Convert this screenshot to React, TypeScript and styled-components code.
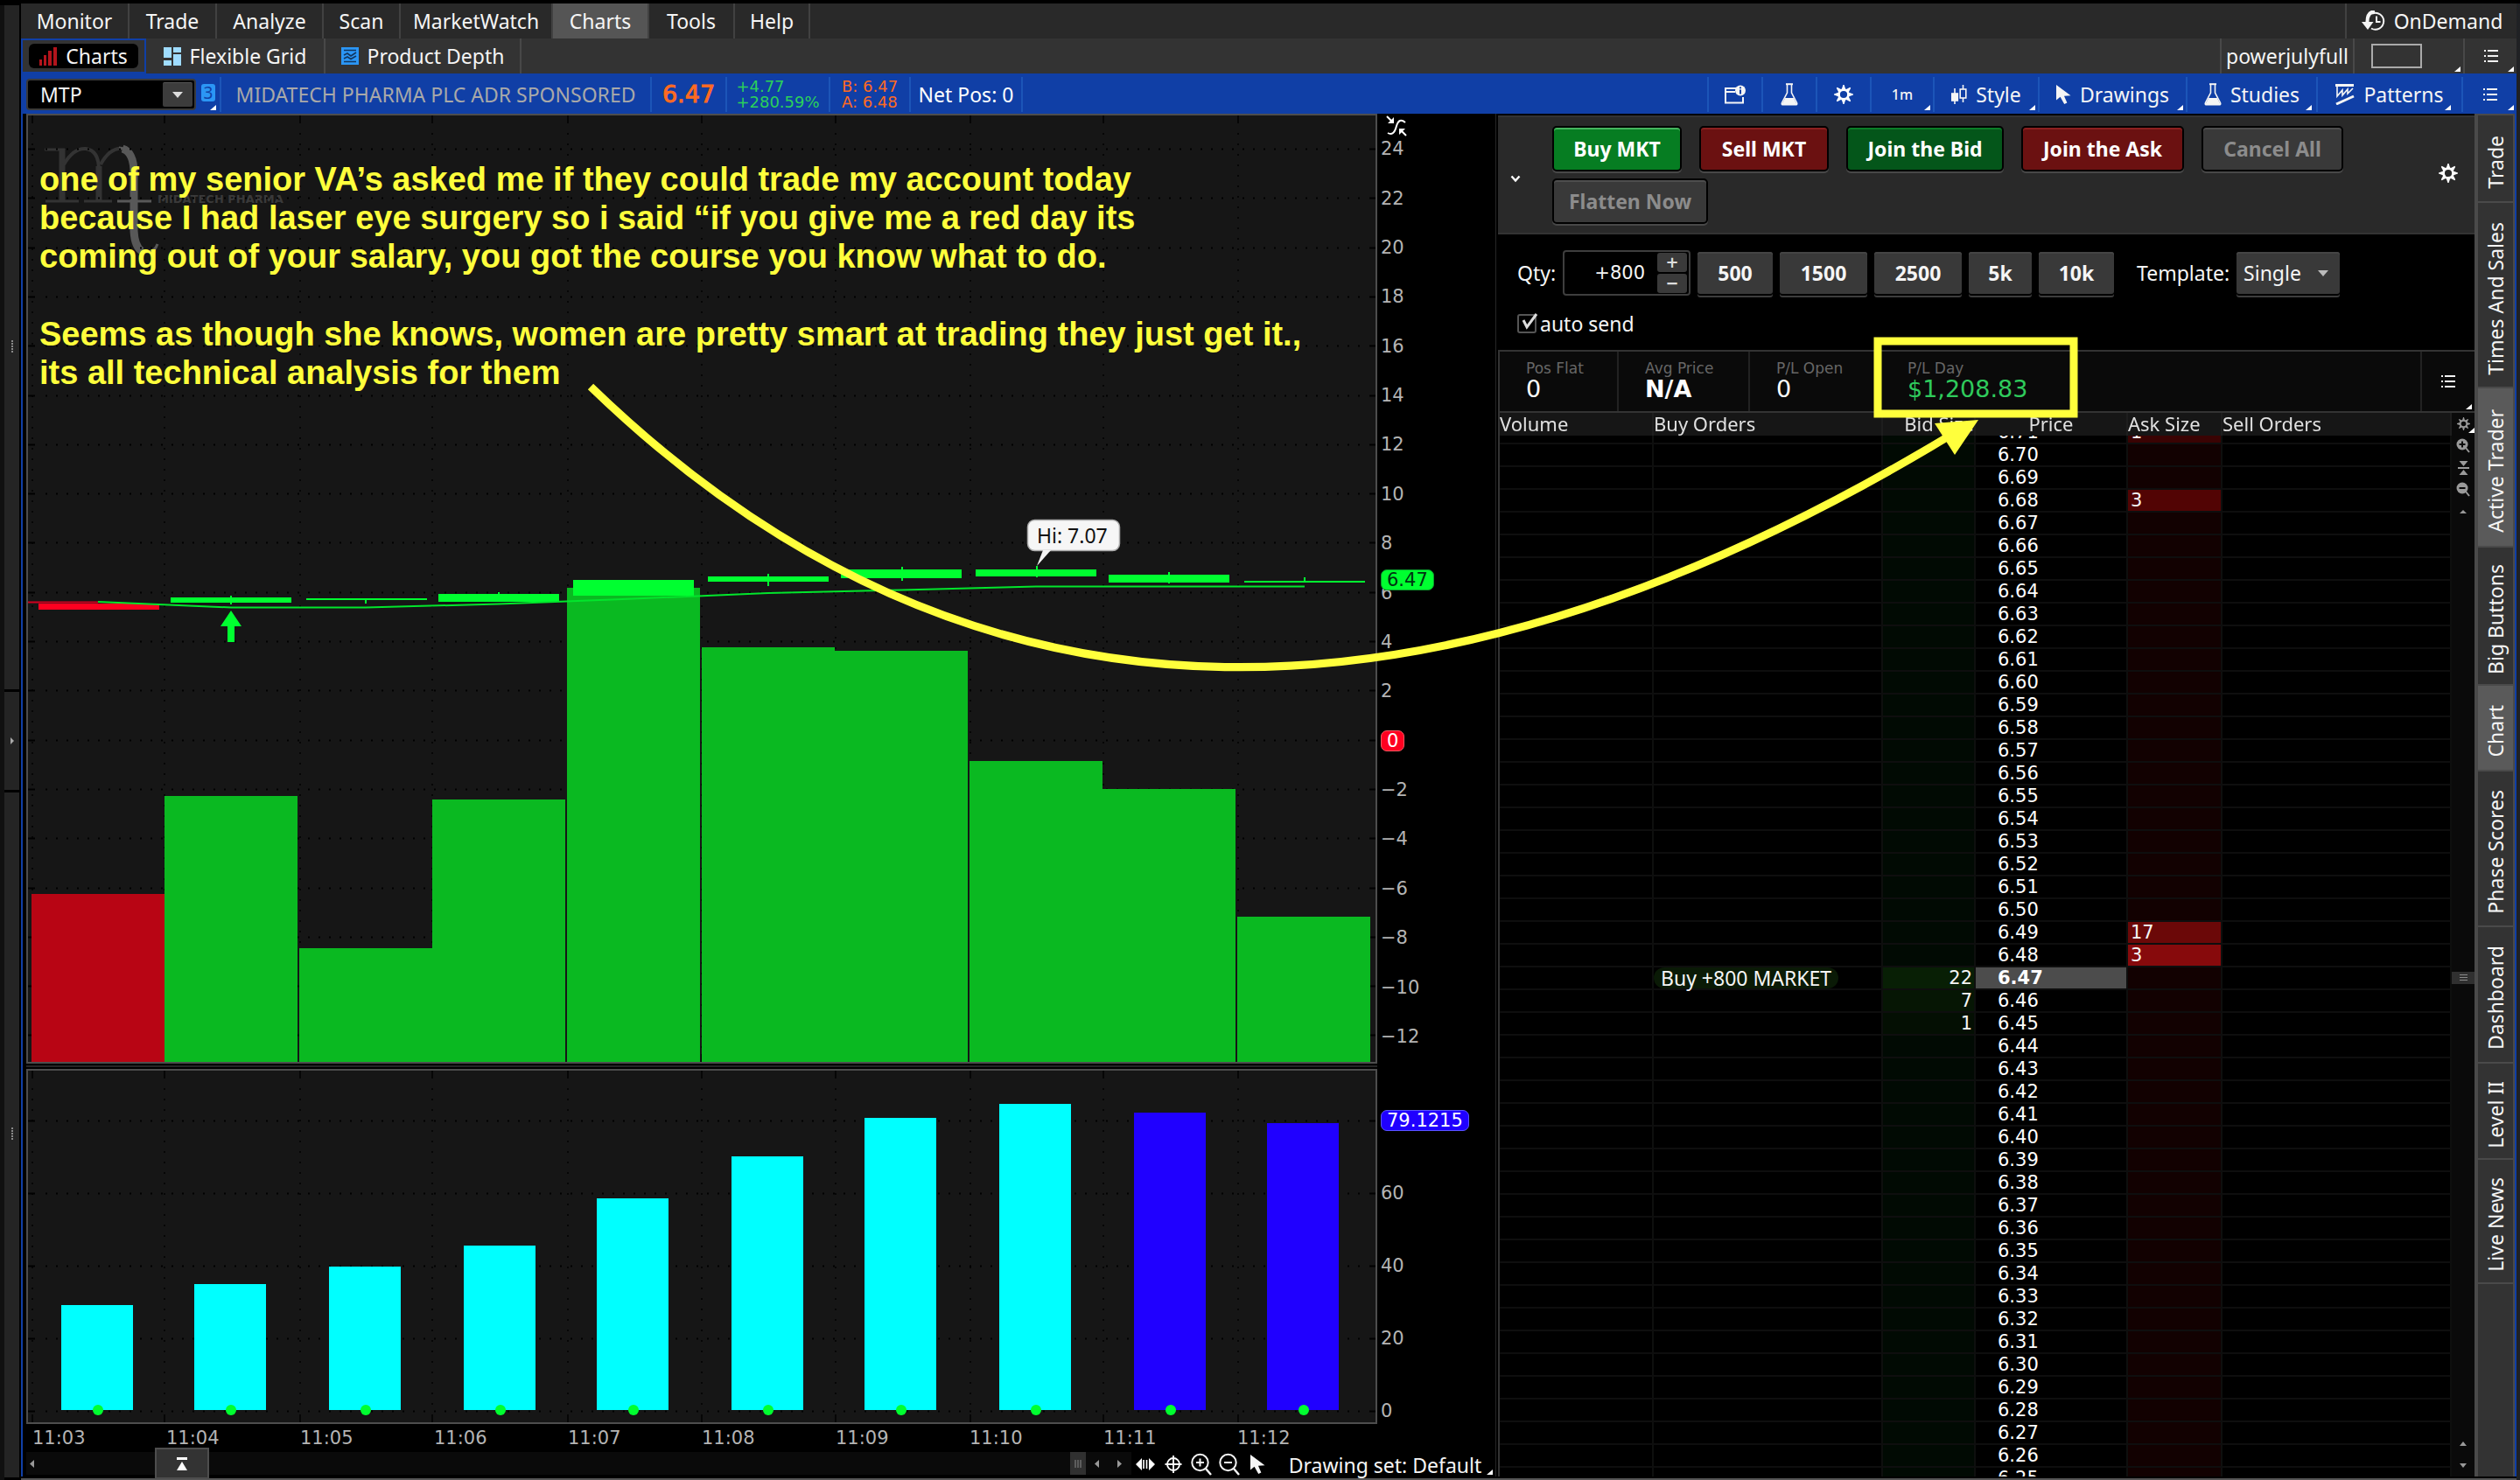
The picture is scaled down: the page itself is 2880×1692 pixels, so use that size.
import React, { useLayoutEffect, useRef } from "react";
import styled, { createGlobalStyle, css } from "styled-components";

const TEXT = `"Noto Sans", "Open Sans", sans-serif`;
const DIGITS = `"DejaVu Sans", "Noto Sans", sans-serif`;
const YELLOW = "#ffff3c";
const BLUE = "#103fa6";

const GlobalStyle = createGlobalStyle`
  * { box-sizing: border-box; }
  body { margin: 0; background: #000; color: #f5f5f5; font: 400 23px/30px ${TEXT}; overflow: hidden; }
  button, input, select { font: inherit; color: inherit; margin: 0; padding: 0; border: 0; background: none; border-radius: 0; }
  p { margin: 0; }
`;

/* ---------- shell ---------- */
const Shell = styled.div`
  position: relative;
  display: flex;
  height: 100vh;
  background: #000;
  border-top: 4px solid #000;
  overflow: hidden;
`;
const Gutter = styled.aside`
  width: 24px;
  flex: none;
  display: flex;
  flex-direction: column;
  margin-top: 2px;
  background: #242424;
  border-left: 5px solid #101010;
  border-right: 2px solid #000;
`;
const GutterPart = styled.div<{ $grow: number }>`
  flex: ${(p) => p.$grow} 1 0;
  display: flex;
  align-items: center;
  justify-content: center;
  border-bottom: 3px solid #000;
`;
const Main = styled.main`
  flex: 1;
  min-width: 0;
  display: flex;
  flex-direction: column;
`;
const RightEdge = styled.div`
  width: 4px;
  flex: none;
  background: #202124;
`;

/* ---------- menu and tab rows ---------- */
const MenuBar = styled.nav`
  display: flex;
  height: 40px;
  background: #292929;
`;
const MenuItem = styled.button<{ $w: number; $active?: boolean }>`
  width: ${(p) => p.$w}px;
  border-right: 2px solid #414141;
  background: ${(p) => (p.$active ? "#555" : "transparent")};
  white-space: nowrap;
`;
const Spacer = styled.div`
  flex: 1;
`;
const OnDemand = styled.button`
  width: 196px;
  display: flex;
  align-items: center;
  justify-content: center;
  gap: 8px;
  border-left: 2px solid #414141;
`;
const TabBar = styled.div`
  display: flex;
  height: 40px;
  background: #333;
`;
const Tab = styled.button<{ $w: number; $active?: boolean }>`
  width: ${(p) => p.$w}px;
  display: flex;
  align-items: center;
  justify-content: center;
  gap: 10px;
  white-space: nowrap;
  border-right: 2px solid #484848;
  ${(p) =>
    p.$active &&
    css`
      border: 2px solid ${BLUE};
    `}
`;
const TabPill = styled.span`
  display: flex;
  align-items: center;
  gap: 10px;
  height: 28px;
  padding: 0 12px;
  border-radius: 6px;
  background: #000;
`;
const TabTool = styled.button<{ $w: number }>`
  position: relative;
  width: ${(p) => p.$w}px;
  display: flex;
  align-items: center;
  justify-content: center;
  border-left: 2px solid #484848;
`;
const ColorSwatch = styled.span`
  width: 58px;
  height: 28px;
  margin-right: 28px;
  border: 2px solid #aaa;
`;
const Corner = styled.i<{ $right?: number }>`
  position: absolute;
  right: ${(p) => p.$right ?? 3}px;
  bottom: 2px;
  width: 7px;
  height: 6px;
  background: #fff;
  clip-path: polygon(100% 0, 100% 100%, 0 100%);
`;

/* ---------- symbol bar ---------- */
const SymbolBar = styled.div`
  display: flex;
  align-items: stretch;
  height: 46px;
  padding: 4px 0 2px;
  background: ${BLUE};
`;
const SymbolBox = styled.div`
  display: flex;
  align-items: center;
  width: 194px;
  height: 36px;
  margin: 2px 6px 0;
  padding: 0 2px 0 14px;
  border: 2px solid #3a3a3a;
  border-radius: 4px;
  background: #000;
`;
const SymbolInput = styled.input`
  width: 140px;
  outline: 0;
`;
const SymbolDrop = styled.button`
  width: 34px;
  height: 28px;
  display: flex;
  align-items: center;
  justify-content: center;
  background: #3c3c3c;
  border-top: 1px solid #555;
  border-radius: 2px;
`;
const LinkCell = styled.button`
  position: relative;
  width: 21px;
  padding-bottom: 4px;
`;
const LinkBadge = styled.span`
  display: block;
  width: 16px;
  border-radius: 3px;
  background: #2b96f5;
  color: ${BLUE};
  font-size: 19px;
  line-height: 20px;
`;
const QuoteCell = styled.div<{ $w: number; $tone?: string }>`
  width: ${(p) => p.$w}px;
  display: flex;
  align-items: center;
  justify-content: center;
  border-left: 2px solid #1c55b8;
  color: ${(p) => p.$tone ?? "#fff"};
  white-space: nowrap;
`;
const LastPrice = styled.strong`
  font: 500 27px/32px ${DIGITS};
  -webkit-text-stroke: 1px currentColor;
`;
const TwoLine = styled.div`
  font: 400 18px/18px ${DIGITS};
`;
const ToolButton = styled.button<{ $w: number; $small?: boolean }>`
  position: relative;
  width: ${(p) => p.$w}px;
  display: flex;
  align-items: center;
  justify-content: center;
  gap: 10px;
  border-left: 2px solid #1c55b8;
  white-space: nowrap;
  ${(p) => p.$small && css`font-size: 16px; font-weight: 500;`}
`;

/* ---------- body ---------- */
const Body = styled.div`
  flex: 1;
  min-height: 0;
  display: grid;
  grid-template-columns: minmax(0, 1683fr) minmax(0, 1119fr) 46px;
  border: solid ${BLUE};
  border-width: 0 2px;
`;
const BottomLine = styled.div`
  height: 4px;
  flex: none;
  border-top: 2px solid #000;
  background: #555;
`;

/* ---------- chart column ---------- */
const ChartColumn = styled.section`
  min-width: 0;
  display: flex;
  flex-direction: column;
  padding-left: 4px;
`;
const PlotRow = styled.div<{ $grow: number }>`
  flex: ${(p) => p.$grow} 1 0;
  min-height: 0;
  display: grid;
  grid-template-columns: minmax(0, 1fr) 135px;
`;
const Plot = styled.div`
  min-height: 0;
  border: 2px solid #4d4d4d;
  background: #161616;
  svg { display: block; width: 100%; height: 100%; }
`;
const PaneSplit = styled.div`
  height: 6px;
  margin-right: 135px;
  border: solid #000;
  border-width: 2px 0;
  background: #262626;
`;
const Axis = styled.div<{ $top: number; $spill?: number }>`
  position: relative;
  display: flex;
  flex-direction: column;
  margin-bottom: -${(p) => p.$spill ?? 0}px;
  padding: ${(p) => p.$top}px 0 3px 4px;
  font: 400 21px/24px ${DIGITS};
  color: #b4b4b4;
`;
const Tick = styled.div`
  flex: 1;
  display: flex;
  align-items: center;
`;
const Bubble = styled.span<{ $bg: string; $edge: string; $ink: string }>`
  height: 24px;
  padding: 0 6px;
  border: 1px solid ${(p) => p.$edge};
  border-radius: 7px;
  background: ${(p) => p.$bg};
  color: ${(p) => p.$ink};
  font: 400 21px/22px ${DIGITS};
`;
const FloatBubble = styled(Bubble)`
  position: absolute;
  left: 4px;
  top: 48%;
`;
const AxisTool = styled.button`
  position: absolute;
  left: 10px;
  top: 2px;
`;
const TimeAxis = styled.div`
  display: flex;
  height: 32px;
  flex: none;
  margin-right: 142px;
  padding-left: 7px;
  font: 400 21px/32px ${DIGITS};
  color: #b4b4b4;
`;
const TimeTick = styled.span`
  flex: 1;
`;
const ChartFooter = styled.footer`
  display: flex;
  height: 28px;
  flex: none;
`;
const ScrollTrack = styled.div`
  flex: 1;
  display: flex;
  align-items: center;
  height: 26px;
  padding-left: 4px;
  background: #0a0a0a;
`;
const ExpandButton = styled.button`
  width: 62px;
  height: 36px;
  margin: 0 auto 0 138px;
  border: 2px solid #4d4d4d;
  background: #333;
  z-index: 1;
`;
const ScrollThumb = styled.div`
  width: 18px;
  height: 26px;
  display: flex;
  align-items: center;
  justify-content: center;
  background: #303030;
`;
const FooterIcon = styled.button<{ $w: number }>`
  width: ${(p) => p.$w}px;
  display: flex;
  align-items: center;
  justify-content: center;
`;
const DrawingSet = styled.button`
  position: relative;
  width: 256px;
  padding-left: 4px;
  white-space: nowrap;
`;

/* ---------- trader column ---------- */
const Trader = styled.section`
  min-width: 0;
  min-height: 0;
  display: flex;
  flex-direction: column;
  border-left: 1px solid #262626;
  padding: 2px 0 0 2px;
`;
const ActionPane = styled.div`
  display: flex;
  align-items: center;
  height: 136px;
  border: solid #333;
  border-width: 2px 0;
  background: #292929;
`;
const Fold = styled.button`
  width: 62px;
  padding: 0 0 0 14px;
  text-align: left;
`;
const ActionList = styled.div`
  flex: 1;
  display: flex;
  flex-wrap: wrap;
  gap: 8px 20px;
`;
const tones = {
  buy: ["#067d22", "#45b55e", "#fff"],
  bid: ["#04561a", "#0b7d28", "#fff"],
  sell: ["#6b1111", "#8c2020", "#fff"],
  off: ["#393939", "#4e4e4e", "#8c8c8c"],
};
const ActionButton = styled.button<{ $tone: keyof typeof tones; $w: number }>`
  width: ${(p) => p.$w}px;
  height: 52px;
  border: 2px solid #000;
  border-radius: 5px;
  background: ${(p) => tones[p.$tone][0]};
  box-shadow: inset 0 2px ${(p) => tones[p.$tone][1]}, 0 2px #484848;
  color: ${(p) => tones[p.$tone][2]};
  font-weight: 700;
`;
const GearCell = styled.button`
  width: 60px;
`;
const OrderPane = styled.div`
  display: flex;
  flex-direction: column;
  gap: 22px;
  padding: 18px 22px;
`;
const OrderRow = styled.div`
  display: flex;
  align-items: center;
  gap: 8px;
  height: 52px;
`;
const QtyLabel = styled.label`
  width: 44px;
`;
const QtyBox = styled.div`
  display: flex;
  align-items: center;
  width: 146px;
  height: 52px;
  padding-right: 2px;
  border: 2px solid #3e3e3e;
  border-radius: 4px;
`;
const QtyInput = styled.input`
  width: 92px;
  text-align: right;
  font: 400 21px/24px ${DIGITS};
  outline: 0;
`;
const Steps = styled.div`
  display: flex;
  flex-direction: column;
  gap: 2px;
  margin-left: auto;
`;
const Step = styled.button`
  width: 34px;
  height: 22px;
  border-radius: 3px;
  background: #3a3a3a;
  font: 700 18px/20px ${DIGITS};
  color: #ddd;
`;
const SizeButton = styled.button<{ $w: number }>`
  width: ${(p) => p.$w}px;
  height: 48px;
  border-radius: 3px;
  background: #393939;
  box-shadow: inset 0 2px #454545, 0 2px #000, 0 4px #3c3c3c;
  font-weight: 700;
`;
const TemplateLabel = styled.label`
  display: flex;
  align-items: center;
  gap: 8px;
  margin-left: 18px;
`;
const SelectWrap = styled.span`
  position: relative;
  display: flex;
  align-items: center;
  width: 118px;
  height: 48px;
  border-radius: 3px;
  background: #393939;
  box-shadow: inset 0 2px #454545, 0 2px #000, 0 4px #3c3c3c;
  svg { position: absolute; right: 13px; pointer-events: none; }
`;
const Select = styled.select`
  appearance: none;
  width: 100%;
  padding-left: 8px;
`;
const CheckLabel = styled.label`
  position: relative;
  display: flex;
  align-items: center;
  gap: 4px;
  height: 20px;
  margin-bottom: 2px;
  svg { position: absolute; left: 2px; top: -3px; pointer-events: none; }
`;
const Check = styled.input`
  appearance: none;
  width: 22px;
  height: 22px;
  border: 2px solid #555;
  border-radius: 3px;
`;
const Stats = styled.div`
  display: flex;
  height: 72px;
  border: solid #333;
  border-width: 2px 0 2px 2px;
  background: #0a0a0a;
`;
const Stat = styled.div<{ $w: number; $last?: boolean }>`
  width: ${(p) => p.$w}px;
  padding: 8px 0 0 30px;
  border-right: ${(p) => (p.$last ? "0" : "2px solid #222")};
  white-space: nowrap;
`;
const StatName = styled.div`
  font: 400 17px/22px ${DIGITS};
  color: #666;
`;
const StatValue = styled.div<{ $up?: boolean; $strong?: boolean }>`
  font: ${(p) => (p.$strong ? 700 : 400)} 27px/26px ${DIGITS};
  color: ${(p) => (p.$up ? "#2fcb5c" : "#fff")};
`;
const StatsMenu = styled.button`
  position: relative;
  width: 62px;
  margin-left: auto;
  border-left: 2px solid #222;
`;
const LadderPane = styled.div`
  flex: 1;
  min-height: 0;
  display: flex;
`;
const LadderView = styled.div`
  flex: 1;
  min-width: 0;
  overflow: hidden;
  border-left: 2px solid #333;
`;
const Ladder = styled.table`
  width: 100%;
  table-layout: fixed;
  border-collapse: separate;
  border-spacing: 0;
`;
const Head = styled.th<{ $align?: string; $w: number }>`
  position: sticky;
  top: 0;
  width: ${(p) => p.$w}px;
  height: 26px;
  padding: 0 0 2px;
  background: #161616;
  border-right: 2px solid #1e1e1e;
  color: #e0e0e0;
  font-size: 22px;
  font-weight: 400;
  line-height: 24px;
  text-align: ${(p) => p.$align ?? "left"};
  white-space: nowrap;
`;
const Cell = styled.td<{ $bg?: string }>`
  height: 26px;
  padding: 0;
  border-right: 2px solid #0e0f0e;
  border-bottom: 2px solid #0e0e0e;
  background: ${(p) => p.$bg ?? "#000"};
  line-height: 24px;
  white-space: nowrap;
`;
const BidCell = styled(Cell)`
  padding-right: 2px;
  text-align: right;
  font: 400 21px/24px ${DIGITS};
`;
const PriceCell = styled(Cell)<{ $now: boolean }>`
  padding-left: 25px;
  color: #fff;
  font: ${(p) => (p.$now ? 700 : 400)} 21px/24px ${DIGITS};
`;
const AskCell = styled(Cell)`
  padding-left: 3px;
  font: 400 21px/24px ${DIGITS};
`;
const Order = styled.span`
  display: inline-block;
  padding: 0 8px;
  border-radius: 12px;
  background: #0a1a06;
`;
const LadderTools = styled.div`
  width: 26px;
  display: flex;
  flex-direction: column;
  align-items: center;
  background: #0a0a0a;
`;
const LadderTool = styled.button`
  position: relative;
  width: 26px;
  height: 25px;
  display: flex;
  align-items: center;
  justify-content: center;
  color: #9a9a9a;
`;
const LadderThumb = styled.div`
  width: 26px;
  height: 14px;
  display: flex;
  align-items: center;
  justify-content: center;
  background: #303030;
`;

/* ---------- right rail ---------- */
const Rail = styled.nav`
  display: flex;
  flex-direction: column;
  border: solid #4a4a4a;
  border-width: 2px 2px 0 4px;
  background: #333;
`;
const RailTab = styled.button<{ $h: number; $active?: boolean }>`
  height: ${(p) => p.$h}px;
  display: flex;
  align-items: center;
  justify-content: center;
  padding-top: 8px;
  border-bottom: 2px solid #4a4a4a;
  background: ${(p) => (p.$active ? "#5a5a5a" : "#333")};
  span { writing-mode: vertical-rl; transform: rotate(180deg); line-height: 32px; }
`;

/* ---------- notes drawn over the workspace ---------- */
const Note = styled.div`
  position: absolute;
  left: 45px;
  top: 179px;
  color: ${YELLOW};
  font: 700 38px/44px "Liberation Sans", Arial, sans-serif;
  white-space: nowrap;
  p + p { margin-top: 45px; }
`;
const Ink = styled.svg`
  position: absolute;
  left: 0;
  top: -4px;
  width: 100%;
  height: 100vh;
  pointer-events: none;
`;

/* ---------- icons ---------- */
const ListIcon = () => (
  <svg width="16" height="18" viewBox="0 0 16 18" fill="#f2f2f2">
    {[2, 8, 14].map((y) => (
      <React.Fragment key={y}>
        <rect x="0" y={y} width="2" height="2" />
        <rect x="4" y={y} width="12" height="2" />
      </React.Fragment>
    ))}
  </svg>
);
const Gear = ({ size = 22, color = "#fff" }) => (
  <svg width={size} height={size} viewBox="0 0 22 22" stroke={color} fill="none">
    <circle cx="11" cy="11" r="5.4" strokeWidth="2.6" />
    {[0, 45, 90, 135, 180, 225, 270, 315].map((a) => (
      <path key={a} d="M8.6 5.5L10.4 0H11.6L13.4 5.5Z" fill={color} stroke="none" transform={`rotate(${a} 11 11)`} />
    ))}
  </svg>
);
const Flask = () => (
  <svg width="20" height="26" viewBox="0 0 20 26" fill="none" stroke="#f5f5f5">
    <path d="M6 1.2H14" strokeWidth="2" />
    <path d="M7.5 2V11L1.5 22.5Q0.6 24.8 3 24.8H17Q19.4 24.8 18.5 22.5L12.5 11V2" strokeWidth="1.6" />
    <path d="M5.2 17H14.8L18 23Q18.6 24.6 17 24.6H3Q1.4 24.6 2 23Z" fill="#f5f5f5" stroke="none" />
  </svg>
);
const Cursor = () => (
  <svg width="17" height="22" viewBox="0 0 17 22" fill="#f5f5f5">
    <path d="M0 0V17.5L4.6 13.8L9.2 22L12.4 20.6L9 12.8L16.5 12.2Z" />
  </svg>
);
const caretPaths = {
  down: "M0 0H10L5 10Z",
  up: "M0 10H10L5 0Z",
  left: "M10 0V10L0 5Z",
  right: "M0 0V10L10 5Z",
};
const Caret = ({ w = 12, h = 7, color = "#ccc", d = "down" }: { w?: number; h?: number; color?: string; d?: keyof typeof caretPaths }) => (
  <svg width={w} height={h} viewBox="0 0 10 10" preserveAspectRatio="none" fill={color}>
    <path d={caretPaths[d]} />
  </svg>
);
const Grip = ({ w, h, rows = false }: { w: number; h: number; rows?: boolean }) => (
  <svg width={w} height={h} viewBox={`0 0 ${w} ${h}`} stroke="#8a8a8a" strokeWidth="1">
    {(rows ? [0.5, 3.5, 6.5] : [1, 4, 7]).map((v) => (
      <path key={v} d={rows ? `M0 ${v}H${w}` : `M${v} 0V${h}`} />
    ))}
  </svg>
);
const Dots = () => (
  <svg width="2" height="16" viewBox="0 0 2 16" fill="#8a8a8a">
    {[0, 3, 6, 9, 12].map((y) => <rect key={y} y={y} width="2" height="2" />)}
  </svg>
);
const Lens = ({ plus }: { plus?: boolean }) => (
  <svg width="24" height="26" viewBox="0 0 24 26" fill="none" stroke="#f5f5f5" strokeWidth="2">
    <circle cx="10.5" cy="11" r="9.2" />
    <path d="M17 18L23 25" strokeWidth="2.4" />
    <path d={plus ? "M6 11H15M10.5 6.5V15.5" : "M6 11H15"} />
  </svg>
);
const SmallLens = ({ plus }: { plus?: boolean }) => (
  <svg width="16" height="17" viewBox="0 0 16 17">
    <circle cx="7" cy="7" r="6.5" fill="#9a9a9a" />
    <path d="M11 11L15 16" stroke="#9a9a9a" strokeWidth="2" />
    <path d={plus ? "M3.5 7H10.5M7 3.5V10.5" : "M3.5 7H10.5"} stroke="#0a0a0a" strokeWidth="2" />
  </svg>
);

/* ---------- chart data ---------- */
const times = ["11:03", "11:04", "11:05", "11:06", "11:07", "11:08", "11:09", "11:10", "11:11", "11:12"];
const gridX = [37, 188, 343, 494, 649, 802, 955, 1109, 1261, 1415];
const volume = [
  [36, 1022], [188, 910], [342, 1084], [494, 914], [648, 672],
  [802, 740], [954, 744], [1108, 870], [1260, 902], [1414, 1048],
];
const candles = [
  [195, 683, 6, 264, 681, 691], [350, 684, 2, 418, 684, 690], [501, 679, 9, 570, 677, 680], [655, 663, 18, 0, 0, 0],
  [809, 659, 6, 878, 656, 670], [961, 651, 10, 1031, 648, 664], [1115, 651, 8, 1185, 647, 660],
  [1267, 657, 9, 1336, 654, 667], [1422, 664, 2, 1491, 660, 664],
];
const study = [[70, 1492], [222, 1468], [376, 1448], [530, 1424], [682, 1370], [836, 1322], [988, 1278], [1142, 1262], [1296, 1272], [1448, 1284]];
const priceY = Array.from({ length: 19 }, (_, i) => Math.round(170 + i * 56.3));
const studyY = [1281, 1364, 1447, 1530, 1613];

const GridLines = ({ ys, top, bottom }: { ys: number[]; top: number; bottom: number }) => (
  <g stroke="#000">
    {ys.map((y) => (
      <React.Fragment key={y}>
        <path d={`M52 ${y}.5H1562`} strokeWidth="2" strokeDasharray="2 10" />
        <path d={`M32 ${y}.5H40M1565 ${y}.5H1572`} strokeWidth="2" />
      </React.Fragment>
    ))}
    {gridX.map((x) => (
      <React.Fragment key={x}>
        <path d={`M${x} ${top + 20}V${bottom - 10}`} strokeWidth="1.4" strokeDasharray="2 10" />
        <path d={`M${x} ${top}V${top + 9}M${x} ${bottom - 9}V${bottom}`} strokeWidth="1.4" />
      </React.Fragment>
    ))}
  </g>
);

const PriceChart = () => (
  <svg viewBox="32 132 1540 1082" preserveAspectRatio="none">
    <g fill="none" stroke="#333">
      <path d="M51 171H74M52 230H90M96 230H128" strokeWidth="3" />
      <path d="M71 170V229M113 190V229" strokeWidth="7" />
      <path d="M73 188Q84 169 98 170Q113 172 113 194" strokeWidth="4" />
      <path d="M115 188Q126 168 141 170" strokeWidth="4" />
    </g>
    <g fill="none" stroke="#585858">
      <path d="M136 169Q153 170 153 196V262Q154 286 168 288Q177 288 180 279" strokeWidth="3" />
      <path d="M140 170Q153 174 153 198V264Q154 282 162 287" strokeWidth="9" />
      <path d="M134 230H173" strokeWidth="3" />
    </g>
    <text x="180" y="232" fill="#3a3a3a" fontFamily="DejaVu Sans" fontWeight="700" fontSize="13">MIDATECH PHARMA</text>
    <GridLines ys={priceY} top={132} bottom={1214} />
    {volume.map(([x, y], i) => (
      <rect key={x} x={x} y={y} width="152" height={1214 - y} fill={i ? "#0ab921" : "#b80514"} />
    ))}
    <g fill="#00ff30" stroke="#00ff30">
      {candles.map(([x, y, h, wx, w1, w2]) => (
        <React.Fragment key={x}>
          <rect x={x} y={y} width="138" height={h} stroke="none" />
          {wx > 0 && <path d={`M${wx} ${w1}V${w2}`} strokeWidth="2" />}
        </React.Fragment>
      ))}
      <path d="M264 698L276 716H268V734H260V716H252Z" stroke="none" />
    </g>
    <rect x="44" y="690" width="138" height="7" fill="#ff0020" />
    <path d="M32 688.5H112" stroke="#d00020" strokeWidth="2" />
    <path d="M112 688L264 694.5H418L570 690.5L724 684.5L878 678L1031 674.5L1184 670.5H1491" fill="none" stroke="#02e62c" strokeWidth="2" />
    <rect x="1174.5" y="594.5" width="105" height="35" rx="8" fill="#f6f6f6" stroke="#aaa" strokeWidth="1.5" />
    <path d="M1192 629L1185 647L1201 629Z" fill="#f4f4f4" />
    <text x="1185" y="621" fill="#111" fontFamily="Noto Sans" fontSize="23">Hi: 7.07</text>
  </svg>
);

const StudyChart = () => (
  <svg viewBox="32 1224 1540 402" preserveAspectRatio="none">
    <GridLines ys={studyY} top={1224} bottom={1626} />
    {study.map(([x, y], i) => (
      <rect key={x} x={x} y={y} width="82" height={1612 - y} fill={i > 7 ? "#2000ff" : "#00ffff"} />
    ))}
    {study.map(([x]) => <circle key={x} cx={x + 42} cy="1612" r="6" fill="#00ff30" />)}
  </svg>
);

/* ---------- ladder data ---------- */
const asks: Record<string, [string, string]> = {
  "6.71": ["1", "#3a0303"], "6.68": ["3", "#520404"], "6.49": ["17", "#6b0808"], "6.48": ["3", "#870a0c"],
};
const bids: Record<string, [string, string]> = {
  "6.47": ["22", "#081f05"], "6.46": ["7", "#061604"], "6.45": ["1", "#040f03"],
};
const prices = Array.from({ length: 47 }, (_, i) => ((671 - i) / 100).toFixed(2));

const menus: [string, number][] = [["Monitor", 124], ["Trade", 100], ["Analyze", 122], ["Scan", 88], ["MarketWatch", 174], ["Charts", 110], ["Tools", 98], ["Help", 86]];
const rail: [string, number][] = [["Trade", 100], ["Times And Sales", 212], ["Active Trader", 182], ["Big Buttons", 158], ["Chart", 98], ["Phase Scores", 178], ["Dashboard", 156], ["Level II", 110], ["Live News", 142]];

export default function App() {
  const ladder = useRef<HTMLDivElement>(null);
  useLayoutEffect(() => {
    if (ladder.current) ladder.current.scrollTop = 16;
  }, []);

  return (
    <>
      <GlobalStyle />
      <Shell>
        <Gutter>
          <GutterPart $grow={785}><Dots /></GutterPart>
          <GutterPart $grow={112}><Caret d="right" w={4} h={8} color="#aaa" /></GutterPart>
          <GutterPart $grow={786}><Dots /></GutterPart>
        </Gutter>
        <Main>
          <MenuBar>
            {menus.map(([m, w]) => <MenuItem key={m} $w={w} $active={m === "Charts"}>{m}</MenuItem>)}
            <Spacer />
            <OnDemand>
              <svg width="30" height="24" viewBox="0 0 30 24" fill="none" stroke="#f5f5f5" strokeWidth="2">
                <path d="M13 3.5A9.5 9.5 0 1 1 12 20.5" />
                <path d="M18 6.5V13H22.5" />
                <path d="M16 1Q7 2 7.5 14" strokeWidth="4" />
                <path d="M1 13H14.5L8 22Z" fill="#f5f5f5" stroke="none" />
              </svg>
              OnDemand
            </OnDemand>
          </MenuBar>

          <TabBar>
            <Tab $w={143} $active>
              <TabPill>
                <svg width="20" height="21" viewBox="0 0 20 21" fill="#b3141c">
                  <rect y="14" width="3" height="7" /><rect x="5" y="9" width="3" height="12" />
                  <rect x="10" y="4" width="4" height="17" /><rect x="16" width="4" height="21" />
                </svg>
                Charts
              </TabPill>
            </Tab>
            <Tab $w={205}>
              <svg width="20" height="21" viewBox="0 0 20 21" fill="#9fdcff">
                <rect width="9" height="12" /><rect x="11" width="9" height="6" /><rect y="15" width="9" height="6" /><rect x="11" y="8" width="9" height="13" />
              </svg>
              Flexible Grid
            </Tab>
            <Tab $w={224}>
              <svg width="20" height="20" viewBox="0 0 20 20" fill="none" stroke="#12365f" strokeWidth="1.6">
                <rect width="20" height="20" fill="#2b96f5" stroke="none" />
                <path d="M3 3.5H17M3 16.5H17M3 9L7 7L11 10L17 6M3 13L7 11L11 13.5L17 10" />
              </svg>
              Product Depth
            </Tab>
            <Spacer />
            <TabTool $w={152}>powerjulyfull</TabTool>
            <TabTool $w={126}><ColorSwatch /><Corner /></TabTool>
            <TabTool $w={61}><ListIcon /><Corner /></TabTool>
          </TabBar>

          <SymbolBar>
            <SymbolBox>
              <SymbolInput aria-label="Symbol" defaultValue="MTP" />
              <SymbolDrop aria-label="Symbol list"><Caret color="#ddd" /></SymbolDrop>
            </SymbolBox>
            <LinkCell aria-label="Link 3"><LinkBadge>3</LinkBadge><Corner $right={4} /></LinkCell>
            <QuoteCell $w={492} $tone="#a9a9a9">MIDATECH PHARMA PLC ADR SPONSORED</QuoteCell>
            <QuoteCell $w={86} $tone="#ff6a22"><LastPrice>6.47</LastPrice></QuoteCell>
            <QuoteCell $w={118} $tone="#2bd15a"><TwoLine>+4.77<br />+280.59%</TwoLine></QuoteCell>
            <QuoteCell $w={92} $tone="#ff6a22"><TwoLine>B: 6.47<br />A: 6.48</TwoLine></QuoteCell>
            <QuoteCell $w={128}>Net Pos: 0</QuoteCell>
            <QuoteCell $w={2} />
            <Spacer />
            <ToolButton $w={62} aria-label="Info">
              <svg width="24" height="22" viewBox="0 0 24 22" fill="none" stroke="#f5f5f5" strokeWidth="2">
                <path d="M13 4H1V20.5H21V14M1 8H12" />
                <circle cx="18" cy="6.5" r="6" fill="#f5f5f5" stroke="none" />
                <path d="M18 2.5V4.2M18 5.5V10.5" stroke={BLUE} />
              </svg>
            </ToolButton>
            <ToolButton $w={62} aria-label="Studies"><Flask /></ToolButton>
            <ToolButton $w={62} aria-label="Settings"><Gear /></ToolButton>
            <ToolButton $w={72} $small>1m<Corner /></ToolButton>
            <ToolButton $w={120}>
              <svg width="18" height="22" viewBox="0 0 18 22" fill="none" stroke="#f5f5f5" strokeWidth="1.6">
                <path d="M4 4V22" /><rect x="0.8" y="10" width="6.5" height="8" fill="#f5f5f5" />
                <path d="M13.5 0V5M13.5 15V20" /><rect x="10.2" y="5" width="6.6" height="10" />
              </svg>
              Style<Corner />
            </ToolButton>
            <ToolButton $w={169}><Cursor />Drawings<Corner /></ToolButton>
            <ToolButton $w={149}><Flask />Studies<Corner $right={5} /></ToolButton>
            <ToolButton $w={166}>
              <svg width="22" height="24" viewBox="0 0 22 24" fill="none" stroke="#f5f5f5">
                <path d="M0 1.5H21" strokeWidth="3" /><path d="M2 3V14L8 7V13L14 6V11L20 5" strokeWidth="1.6" /><path d="M1 23L21 14" strokeWidth="3" />
              </svg>
              Patterns<Corner $right={12} />
            </ToolButton>
            <ToolButton $w={63} aria-label="Menu"><ListIcon /><Corner /></ToolButton>
          </SymbolBar>

          <Body>
            <ChartColumn>
              <PlotRow $grow={1086}>
                <Plot><PriceChart /></Plot>
                <Axis $top={12}>
                  <AxisTool aria-label="Scale">
                    <svg width="24" height="24" viewBox="0 0 24 24" fill="none" stroke="#fff" strokeWidth="2">
                      <path d="M2 20Q9 24 12 12Q15 2 22 8" />
                      <path d="M1 1L7 7M23 23L17 17" />
                      <path d="M9 2V9H2ZM15 22V15H22Z" fill="#fff" stroke="none" />
                    </svg>
                  </AxisTool>
                  {priceY.map((_, i) => {
                    const v = 24 - i * 2;
                    return <Tick key={v}>{v === 0 ? <Bubble $bg="#ff0020" $edge="#ff5a62" $ink="#fff">0</Bubble> : String(v).replace("-", "−")}</Tick>;
                  })}
                  <FloatBubble $bg="#00ff30" $edge="#0a9a2b" $ink="#031">6.47</FloatBubble>
                </Axis>
              </PlotRow>
              <PaneSplit />
              <PlotRow $grow={406}>
                <Plot><StudyChart /></Plot>
                <Axis $top={18} $spill={29}>
                  <Tick><Bubble $bg="#2000ff" $edge="#5a55ff" $ink="#fff">79.1215</Bubble></Tick>
                  {[60, 40, 20, 0].map((v) => <Tick key={v}>{v}</Tick>)}
                </Axis>
              </PlotRow>
              <TimeAxis>{times.map((t) => <TimeTick key={t}>{t}</TimeTick>)}</TimeAxis>
              <ChartFooter>
                <ScrollTrack>
                  <Caret d="left" w={5} h={9} color="#999" />
                  <ExpandButton aria-label="Expand">
                    <svg width="14" height="16" viewBox="0 0 14 16" fill="#fff"><rect x="1" width="12" height="3" /><path d="M7 5L13 15H1Z" /></svg>
                  </ExpandButton>
                  <ScrollThumb><Grip w={8} h={9} /></ScrollThumb>
                  <FooterIcon $w={24} aria-label="Left"><Caret d="left" w={5} h={9} color="#999" /></FooterIcon>
                  <FooterIcon $w={28} aria-label="Right"><Caret d="right" w={5} h={9} color="#999" /></FooterIcon>
                </ScrollTrack>
                <FooterIcon $w={32} aria-label="Pan">
                  <svg width="22" height="16" viewBox="0 0 22 16" fill="#fff"><path d="M0 8L7 1V15ZM22 8L15 1V15Z" /><path d="M9 3V13M12.5 3V13" stroke="#fff" strokeWidth="1.6" /></svg>
                </FooterIcon>
                <FooterIcon $w={32} aria-label="Crosshair">
                  <svg width="20" height="22" viewBox="0 0 20 22" fill="none" stroke="#fff" strokeWidth="1.8"><circle cx="10" cy="11" r="7" /><path d="M10 1V21M0.5 11H19.5" /></svg>
                </FooterIcon>
                <FooterIcon $w={32} aria-label="Zoom in"><Lens plus /></FooterIcon>
                <FooterIcon $w={32} aria-label="Zoom out"><Lens /></FooterIcon>
                <FooterIcon $w={32} aria-label="Pointer"><Cursor /></FooterIcon>
                <DrawingSet>Drawing set: Default<Corner /></DrawingSet>
              </ChartFooter>
            </ChartColumn>

            <Trader>
              <ActionPane>
                <Fold aria-label="Collapse">
                  <svg width="12" height="9" viewBox="0 0 12 9" fill="none" stroke="#fff" strokeWidth="2.4"><path d="M1.5 1.5L6 6.5L10.5 1.5" /></svg>
                </Fold>
                <ActionList>
                  <ActionButton $tone="buy" $w={148}>Buy MKT</ActionButton>
                  <ActionButton $tone="sell" $w={148}>Sell MKT</ActionButton>
                  <ActionButton $tone="bid" $w={180}>Join the Bid</ActionButton>
                  <ActionButton $tone="sell" $w={186}>Join the Ask</ActionButton>
                  <ActionButton $tone="off" $w={162}>Cancel All</ActionButton>
                  <ActionButton $tone="off" $w={178}>Flatten Now</ActionButton>
                </ActionList>
                <GearCell aria-label="Trade settings"><Gear /></GearCell>
              </ActionPane>
              <OrderPane>
                <OrderRow>
                  <QtyLabel htmlFor="qty">Qty:</QtyLabel>
                  <QtyBox>
                    <QtyInput id="qty" defaultValue="+800" />
                    <Steps><Step>+</Step><Step>−</Step></Steps>
                  </QtyBox>
                  <SizeButton $w={86}>500</SizeButton>
                  <SizeButton $w={100}>1500</SizeButton>
                  <SizeButton $w={100}>2500</SizeButton>
                  <SizeButton $w={72}>5k</SizeButton>
                  <SizeButton $w={86}>10k</SizeButton>
                  <TemplateLabel>
                    Template:
                    <SelectWrap>
                      <Select defaultValue="Single"><option>Single</option></Select>
                      <Caret color="#bbb" />
                    </SelectWrap>
                  </TemplateLabel>
                </OrderRow>
                <CheckLabel>
                  <Check type="checkbox" defaultChecked />
                  <svg width="22" height="22" viewBox="0 0 22 22" fill="none" stroke="#ddd" strokeWidth="3"><path d="M5 9L9 17L20 2" /></svg>
                  auto send
                </CheckLabel>
              </OrderPane>
              <Stats>
                <Stat $w={136}><StatName>Pos Flat</StatName><StatValue>0</StatValue></Stat>
                <Stat $w={150}><StatName>Avg Price</StatName><StatValue $strong>N/A</StatValue></Stat>
                <Stat $w={150}><StatName>P/L Open</StatName><StatValue>0</StatValue></Stat>
                <Stat $w={224} $last><StatName>P/L Day</StatName><StatValue $up>$1,208.83</StatValue></Stat>
                <StatsMenu aria-label="Columns"><ListIcon /><Corner /></StatsMenu>
              </Stats>
              <LadderPane>
                <LadderView ref={ladder}>
                  <Ladder>
                    <thead>
                      <tr>
                        <Head $w={176}>Volume</Head>
                        <Head $w={262}>Buy Orders</Head>
                        <Head $w={106} $align="right">Bid Size</Head>
                        <Head $w={174} $align="center">Price</Head>
                        <Head $w={108}>Ask Size</Head>
                        <Head $w={262}>Sell Orders</Head>
                      </tr>
                    </thead>
                    <tbody>
                      {prices.map((p) => (
                        <tr key={p}>
                          <Cell />
                          <Cell>{p === "6.47" && <Order>Buy +800 MARKET</Order>}</Cell>
                          <BidCell $bg={bids[p]?.[1] ?? "#010a03"}>{bids[p]?.[0]}</BidCell>
                          <PriceCell $now={p === "6.47"} $bg={p === "6.47" ? "#4c4c4c" : undefined}>{p}</PriceCell>
                          <AskCell $bg={asks[p]?.[1] ?? "#120101"}>{asks[p]?.[0]}</AskCell>
                          <Cell />
                        </tr>
                      ))}
                    </tbody>
                  </Ladder>
                </LadderView>
                <LadderTools>
                  <LadderTool aria-label="Ladder settings"><Gear size={15} color="#9a9a9a" /><Corner $right={0} /></LadderTool>
                  <LadderTool aria-label="Zoom in"><SmallLens plus /></LadderTool>
                  <LadderTool aria-label="Center">
                    <svg width="13" height="16" viewBox="0 0 13 16" fill="#9a9a9a"><path d="M1.5 0H11.5L6.5 6Z" /><rect y="7" width="13" height="2" /><path d="M1.5 16H11.5L6.5 10Z" /></svg>
                  </LadderTool>
                  <LadderTool aria-label="Zoom out"><SmallLens /></LadderTool>
                  <LadderTool aria-label="Up"><Caret d="up" w={8} h={4} color="#999" /></LadderTool>
                  <Spacer />
                  <LadderThumb><Grip w={9} h={8} rows /></LadderThumb>
                  <Spacer />
                  <LadderTool aria-label="Scroll up"><Caret d="up" w={8} h={5} color="#999" /></LadderTool>
                  <LadderTool aria-label="Scroll down"><Caret w={8} h={5} color="#999" /></LadderTool>
                </LadderTools>
              </LadderPane>
            </Trader>

            <Rail>
              {rail.map(([r, h]) => (
                <RailTab key={r} $h={h} $active={r === "Active Trader" || r === "Chart"}><span>{r}</span></RailTab>
              ))}
            </Rail>
          </Body>
          <BottomLine />
        </Main>
        <RightEdge />

        <Note>
          <p>
            one of my senior VA’s asked me if they could trade my account today<br />
            because I had laser eye surgery so i said “if you give me a red day its<br />
            coming out of your salary, you got the course you know what to do.
          </p>
          <p>
            Seems as though she knows, women are pretty smart at trading they just get it.,<br />
            its all technical analysis for them
          </p>
        </Note>
        <Ink viewBox="0 0 2880 1692" preserveAspectRatio="none" fill="none" stroke={YELLOW}>
          <rect x="2146" y="390" width="224" height="83" strokeWidth="9" />
          <path d="M675 442Q1306 1053 2225 500" strokeWidth="9" />
          <path d="M2261 480L2211 484L2234 520Z" fill={YELLOW} stroke="none" />
        </Ink>
      </Shell>
    </>
  );
}
